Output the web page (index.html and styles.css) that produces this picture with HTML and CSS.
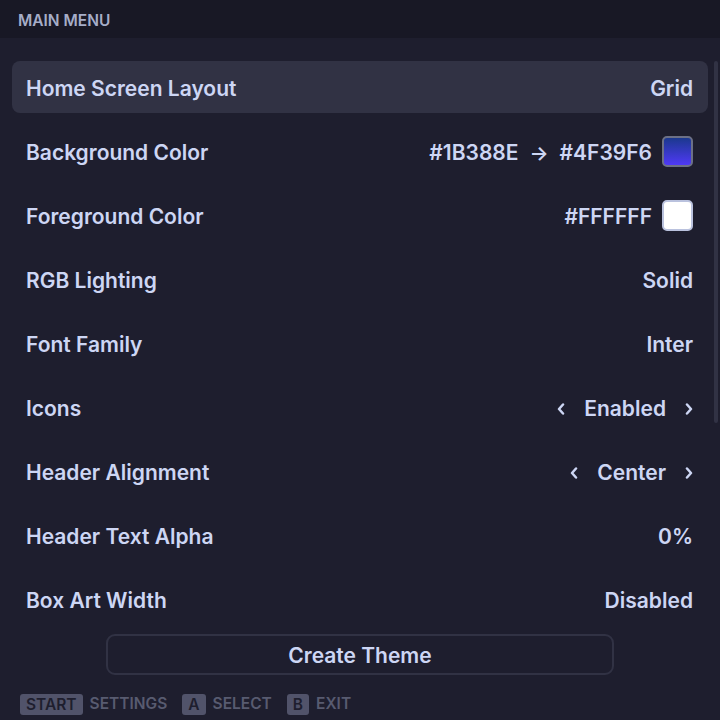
FILE: index.html
```html
<!DOCTYPE html>
<html>
<head>
<meta charset="utf-8">
<link rel="stylesheet" href="styles.css">
</head>
<body>
<div class="app">
  <header class="topbar">MAIN MENU</header>
  <div class="scroller">
    <div class="list">
      <div class="row selected"><span class="label">Home Screen Layout</span><span class="value">Grid</span></div>
      <div class="row"><span class="label">Background Color</span><span class="value">#1B388E <span class="arrow">→</span> #4F39F6 <span class="swatch grad"></span></span></div>
      <div class="row"><span class="label">Foreground Color</span><span class="value">#FFFFFF <span class="swatch white"></span></span></div>
      <div class="row"><span class="label">RGB Lighting</span><span class="value">Solid</span></div>
      <div class="row"><span class="label">Font Family</span><span class="value">Inter</span></div>
      <div class="row"><span class="label">Icons</span><span class="value cycle"><svg class="chev" viewBox="0 0 8 12"><path d="M6 1.5 L2 6 L6 10.5"/></svg><span>Enabled</span><svg class="chev" viewBox="0 0 8 12"><path d="M2 1.5 L6 6 L2 10.5"/></svg></span></div>
      <div class="row"><span class="label">Header Alignment</span><span class="value cycle"><svg class="chev" viewBox="0 0 8 12"><path d="M6 1.5 L2 6 L6 10.5"/></svg><span>Center</span><svg class="chev" viewBox="0 0 8 12"><path d="M2 1.5 L6 6 L2 10.5"/></svg></span></div>
      <div class="row"><span class="label">Header Text Alpha</span><span class="value">0%</span></div>
      <div class="row"><span class="label">Box Art Width</span><span class="value">Disabled</span></div>
    </div>
    <div class="thumb"></div>
  </div>
  <div class="actions">
    <button class="create">Create Theme</button>
  </div>
  <footer class="hints">
    <span class="key">START</span><span class="hint">SETTINGS</span>
    <span class="key">A</span><span class="hint">SELECT</span>
    <span class="key">B</span><span class="hint">EXIT</span>
  </footer>
</div>
</body>
</html>
```
FILE: styles.css
```css
* { box-sizing: border-box; }
html, body {
  margin: 0;
  padding: 0;
  width: 720px;
  height: 720px;
  overflow: hidden;
  background: #1e1e2e;
  font-family: "Inter", "Noto Sans", sans-serif;
  color: #cdd6f4;
}
.app {
  display: flex;
  flex-direction: column;
  height: 720px;
}
.topbar {
  height: 38px;
  flex: 0 0 38px;
  background: #181825;
  color: #a6adc8;
  font-size: 15.5px;
  font-weight: 600;
  padding-left: 18px;
  display: flex;
  align-items: center;
  padding-top: 3px;
}
.scroller {
  position: relative;
  margin-top: 23px;
  padding: 0 12px;
  height: 567px;
  flex: 0 0 567px;
  overflow: hidden;
}
.thumb {
  position: absolute;
  top: 0;
  right: 2px;
  width: 4px;
  height: 362px;
  border-radius: 2px;
  background: #313244;
}
.list {
  display: flex;
  flex-direction: column;
  gap: 12px;
}
.row {
  flex: 0 0 52px;
  height: 52px;
  display: flex;
  align-items: center;
  justify-content: space-between;
  padding: 3px 15px 0 14px;
  border-radius: 8px;
  font-size: 21px;
  font-weight: 600;
}
.row.selected {
  background: #313244;
}
.value {
  display: flex;
  align-items: center;
  gap: 10px;
}
.arrow {
  font-size: 20px;
  margin: 0 1px;
}
.swatch {
  width: 31px;
  height: 31px;
  border-radius: 5px;
  margin-top: -2px;
}
.swatch.grad {
  background: linear-gradient(to bottom, #1b388e, #4f39f6);
  border: 2px solid #6c7086;
}
.swatch.white {
  background: #ffffff;
  border: 2px solid #bac2de;
}
.cycle {
  gap: 19px;
}
.chev {
  width: 8px;
  height: 12px;
  fill: none;
  stroke: #cdd6f4;
  stroke-width: 2.5;
  stroke-linecap: round;
  stroke-linejoin: round;
}
.actions {
  display: flex;
  justify-content: center;
  margin-top: 6px;
}
.create {
  width: 508px;
  height: 41px;
  background: transparent;
  border: 2px solid #313244;
  border-radius: 9px;
  color: #cdd6f4;
  font-family: "Inter", "Noto Sans", sans-serif;
  font-size: 21px;
  font-weight: 600;
  padding: 2px 0 0;
  line-height: 1;
}
.hints {
  display: flex;
  align-items: center;
  padding-left: 20px;
  margin-top: 19px;
  font-size: 15.5px;
  font-weight: 600;
  line-height: 1.2;
}
.key {
  background: #51536a;
  color: #1e1e2e;
  border-radius: 3px;
  height: 21px;
  padding: 1px 6px 0;
  display: flex;
  align-items: center;
  font-size: 15.5px;
  margin-right: 7px;
}
.hint {
  color: #585b70;
  margin-right: 15px;
}
```
